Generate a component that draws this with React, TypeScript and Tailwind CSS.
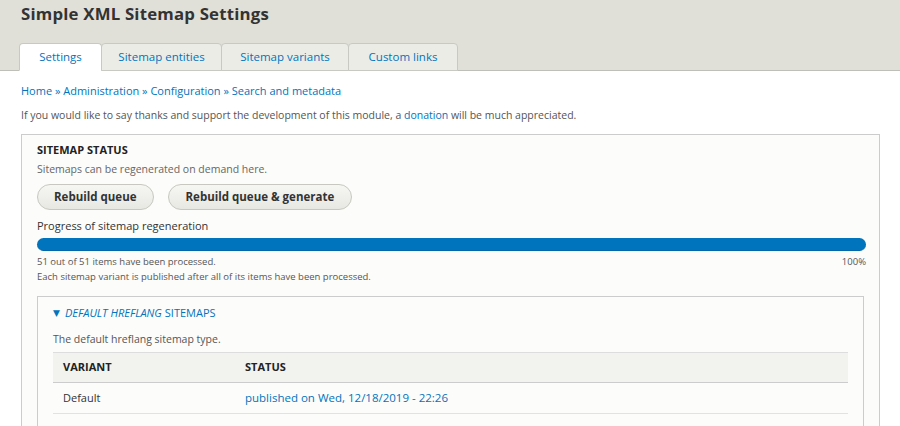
import React from 'react'

const font = { fontFamily: '"Open Sans", "DejaVu Sans", sans-serif' }

const tabs = ['Settings', 'Sitemap entities', 'Sitemap variants', 'Custom links']

export default function App() {
  return (
    <div className="min-h-[426px] bg-white text-[#333]" style={font}>
      {/* header */}
      <header className="bg-[#e0e0d8] border-b border-[#bfbfba] pt-[3px]">
        <h1 className="px-[21px] text-[16.8px] leading-[22px] font-bold text-[#333] tracking-[0.2px] mb-[18px]">
          Simple XML Sitemap Settings
        </h1>
        <nav className="flex px-[19px] -mb-px">
          {tabs.map((t, i) => (
            <a
              key={t}
              className={
                'h-[28px] flex items-center justify-center text-[11.5px] text-[#0074bd] border border-[#c9c9c3] rounded-t-[4px] ' +
                (i === 0 ? 'bg-white border-b-white w-[83px]' : 'bg-[#ecece7] -ml-px ') +
                (i === 1 ? 'w-[121px]' : i === 2 ? 'w-[128px]' : i === 3 ? 'w-[110px]' : '')
              }
            >
              {t}
            </a>
          ))}
        </nav>
      </header>

      <main className="pl-[21px] pr-[20px]">
        {/* breadcrumb */}
        <div className="pt-[12px] text-[11px] leading-[16px] text-[#0074bd]">
          Home » Administration » Configuration » Search and metadata
        </div>
        <p className="mt-[8px] text-[10.5px] leading-[16px] text-[#555]">
          If you would like to say thanks and support the development of this module, a{' '}
          <a className="text-[#0074bd]">donation</a> will be much appreciated.
        </p>

        {/* sitemap status fieldset */}
        <section className="mt-[11px] border border-[#ccc] bg-[#fcfcfa] pl-[15px] pr-[13px] pt-[7px] pb-[40px]">
          <h2 className="text-[11px] leading-[16px] font-bold uppercase text-[#222]">Sitemap status</h2>
          <p className="mt-[3px] text-[10.5px] leading-[16px] text-[#666]">
            Sitemaps can be regenerated on demand here.
          </p>
          <div className="mt-[7px] flex gap-[14px]">
            <button className="h-[26px] px-[16px] rounded-full border border-[#c8c8c0] bg-gradient-to-b from-[#f6f6f3] to-[#e8e8e3] text-[11.5px] font-bold text-[#333]">
              Rebuild queue
            </button>
            <button className="h-[26px] px-[17px] rounded-full border border-[#c8c8c0] bg-gradient-to-b from-[#f6f6f3] to-[#e8e8e3] text-[11.5px] font-bold text-[#333]">
              Rebuild queue &amp; generate
            </button>
          </div>
          <div className="mt-[8px] text-[11px] leading-[16px] text-[#333]">Progress of sitemap regeneration</div>
          <div className="mt-[4px] h-[13px] rounded-full bg-[#0074bd] border-b border-[#0067a8]" />
          <div className="mt-[3px] flex justify-between text-[9.5px] leading-[15px] text-[#555]">
            <span>51 out of 51 items have been processed.</span>
            <span>100%</span>
          </div>
          <div className="text-[9.5px] leading-[15px] text-[#555]">
            Each sitemap variant is published after all of its items have been processed.
          </div>

          {/* inner fieldset */}
          <section className="mt-[12px] mr-[2px] border border-[#ccc] bg-[#fcfcfa] px-[15px] pt-[8px] pb-[30px]">
            <div className="flex items-center text-[11px] leading-[16px] text-[#0074bd] uppercase">
              <span className="text-[9px] mr-[5px]">▼</span>
              <em className="mr-[3px]">Default hreflang</em>
              <span>sitemaps</span>
            </div>
            <p className="mt-[10px] text-[10.5px] leading-[16px] text-[#555]">The default hreflang sitemap type.</p>
            <table className="mt-[5px] w-full text-left text-[11px]">
              <thead>
                <tr className="h-[30px] bg-[#f2f2ee] border-t border-[#ddd] border-b border-b-[#ccc]">
                  <th className="pl-[10px] w-[192px] font-bold uppercase text-[#222]">Variant</th>
                  <th className="font-bold uppercase text-[#222]">Status</th>
                </tr>
              </thead>
              <tbody>
                <tr className="h-[31px] border-b border-[#e2e2e0]">
                  <td className="pl-[10px] text-[#333]">Default</td>
                  <td className="text-[11.5px] text-[#0074bd]">published on Wed, 12/18/2019 - 22:26</td>
                </tr>
              </tbody>
            </table>
          </section>
        </section>
      </main>
    </div>
  )
}
